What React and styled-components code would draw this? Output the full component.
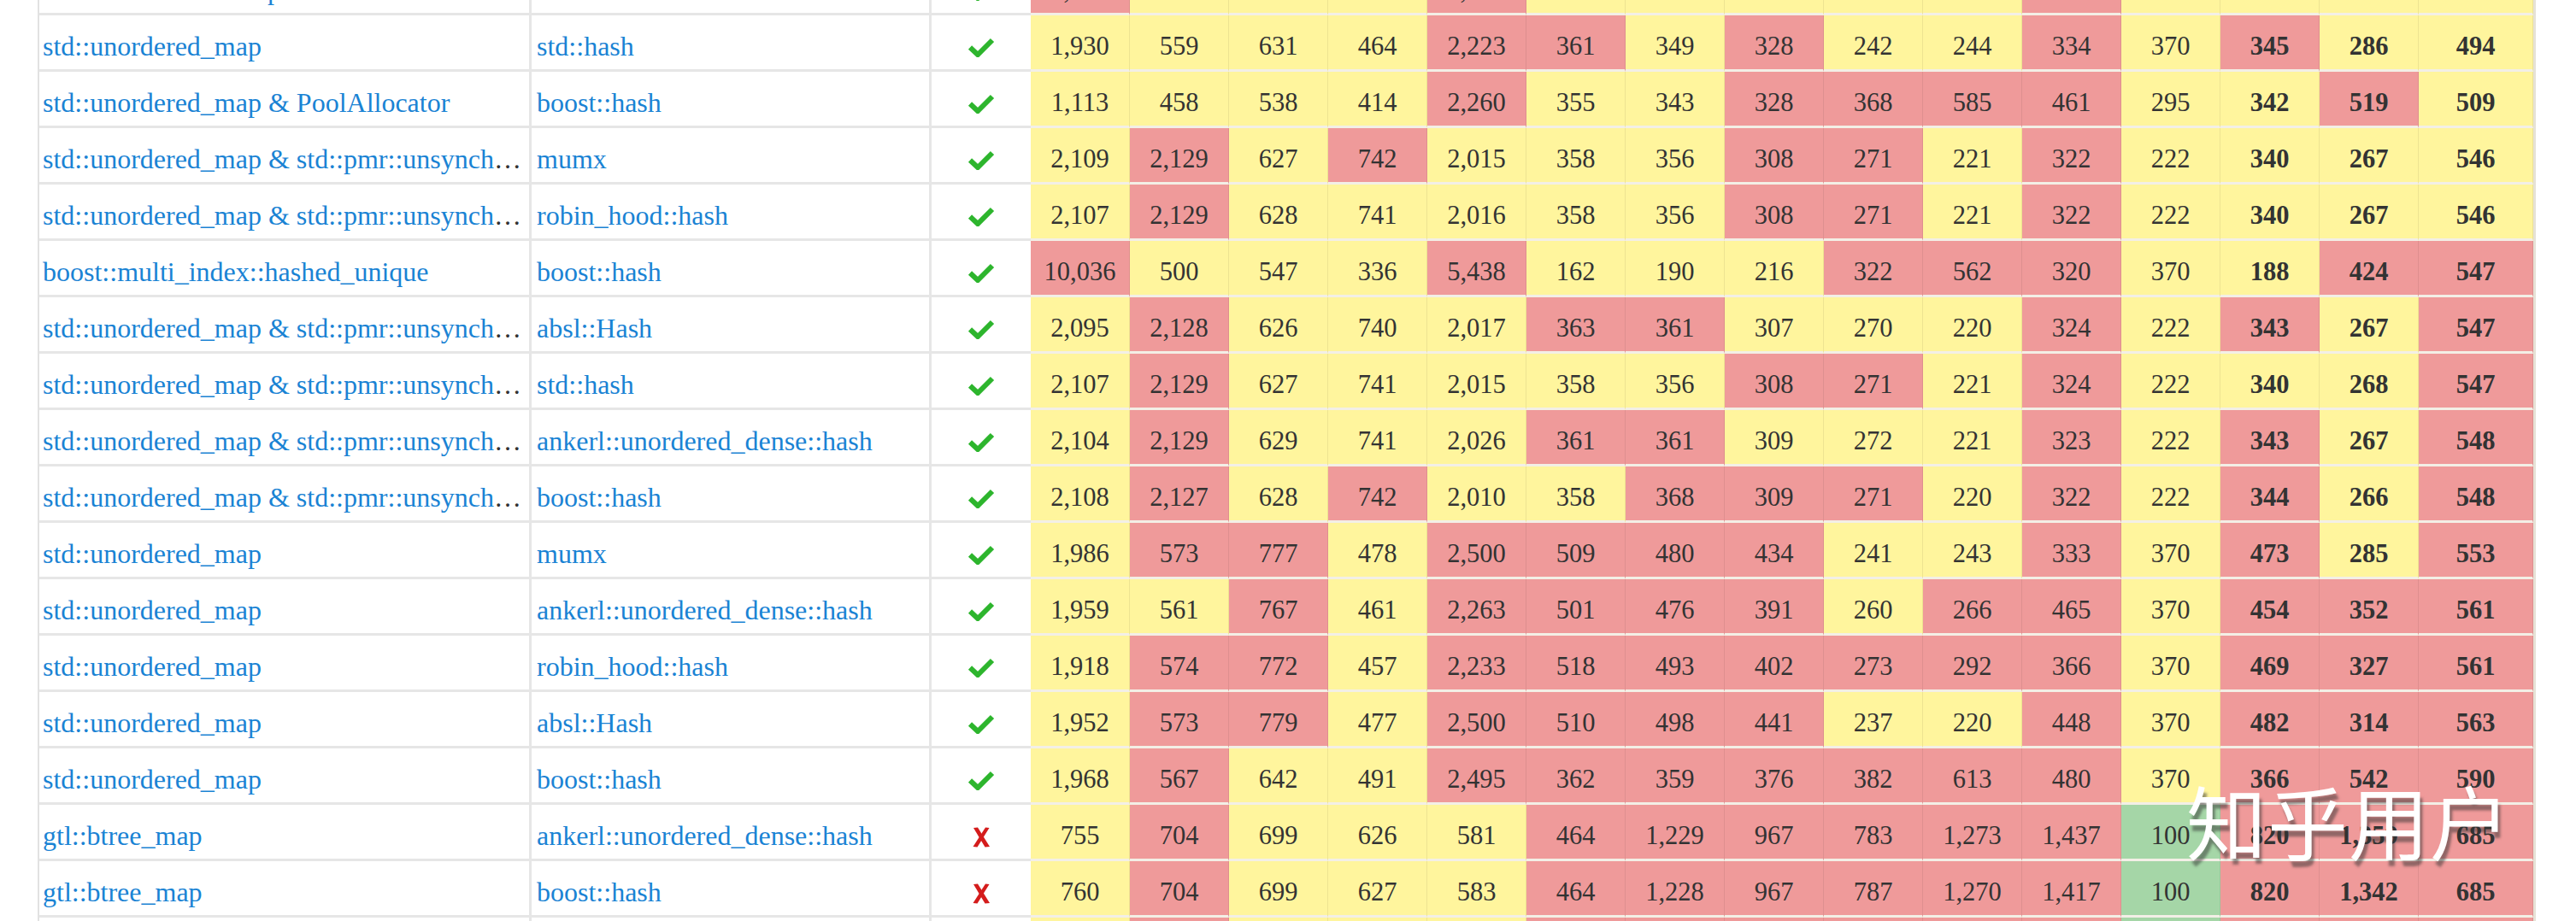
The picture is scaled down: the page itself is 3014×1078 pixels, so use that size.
import React from 'react';
import styled, { createGlobalStyle } from 'styled-components';

const GlobalStyle = createGlobalStyle`
  html, body { margin: 0; padding: 0; background: #ffffff; overflow: hidden; }
  body { font-family: "Liberation Serif", "Times New Roman", serif; }
`;

const Page = styled.div`
  position: relative;
  width: 3014px;
  height: 1078px;
  overflow: hidden;
  padding-left: 44px;
  box-sizing: border-box;
  background: #fff;
`;

const Table = styled.table`
  margin-top: -48px;
  width: 2923px;
  table-layout: fixed;
  border-collapse: separate;
  border-spacing: 0;
  border-left: 2px solid #e2e2e2;
  border-right: 3px solid #e6e2d6;
`;

const Col = styled.col`
  width: ${p => p.$w}px;
`;

const BaseCell = styled.td`
  height: 66px;
  box-sizing: border-box;
  padding: 10px 6px 0;
  vertical-align: middle;
  white-space: nowrap;
  overflow: hidden;
  text-overflow: ellipsis;
  color: #333333;
`;

const TextCell = styled(BaseCell)`
  font-size: 32px;
  padding-left: ${p => (p.$first ? 4 : 6)}px;
  border-bottom: 3px solid #e6e6e6;
  border-right: 3px solid #e6e6e6;
`;

const IconCell = styled(BaseCell)`
  text-align: center;
  border-bottom: 3px solid #e6e6e6;
  padding: 12px 0 0;
`;

const TONES = {
  R: '#ef9a9a',
  Y: '#fff59d',
  G: '#a5d6a7',
};

const ValueCell = styled(BaseCell)`
  text-align: center;
  padding: 10px 2px 0;
  font-size: 30.5px;
  font-weight: ${p => (p.$bold ? 700 : 400)};
  color: #333;
  background: ${p => TONES[p.$tone]};
  border-bottom: 3px solid #f3efe6;
  border-right: 1px solid rgba(0, 0, 0, 0.07);
`;

const Link = styled.a`
  color: #1a83d4;
  text-decoration: none;
`;

const Watermark = styled.div`
  position: absolute;
  left: 2558px;
  top: 912px;
  font-family: "Noto Sans CJK SC", "Noto Sans", sans-serif;
  font-size: 94px;
  line-height: 1;
  color: #ffffff;
  letter-spacing: 1px;
  text-shadow: 3px 7px 3px rgba(50, 50, 50, 0.5);
  pointer-events: none;
`;

const CheckIcon = () => (
  <svg width="32" height="23" viewBox="0 0 32 23" style={{ verticalAlign: 'middle' }}>
    <path d="M3 11.5 L12 20 L29 3" fill="none" stroke="#2db52d" strokeWidth="6" strokeLinejoin="miter" />
  </svg>
);

const CrossIcon = () => (
  <svg width="26" height="26" viewBox="0 0 26 26" style={{ verticalAlign: 'middle' }}>
    <path d="M4 2 L9 1.5 L23 24 L17.5 24.5 Z" fill="#d41c1c" />
    <path d="M18 1.5 L22.5 2 L8.5 24.5 L3.5 24 Z" fill="#d41c1c" />
  </svg>
);

const UNSYNC = 'std::unordered_map & std::pmr::unsynchronized_pool_resource';

const rows = [
  { a: 'boost::container::map', b: 'boost::hash', ok: true,
    v: ['1,987','560','632','465','2,225','348','347','320','243','245','331','370','343','284','495'],
    t: 'RYYYRYYYYYRYYYY' },
  { a: 'std::unordered_map', b: 'std::hash', ok: true,
    v: ['1,930','559','631','464','2,223','361','349','328','242','244','334','370','345','286','494'],
    t: 'YYYYRRYRYYRYRYY' },
  { a: 'std::unordered_map & PoolAllocator', b: 'boost::hash', ok: true,
    v: ['1,113','458','538','414','2,260','355','343','328','368','585','461','295','342','519','509'],
    t: 'YYYYRYYRRRRYYRY' },
  { a: UNSYNC, b: 'mumx', ok: true,
    v: ['2,109','2,129','627','742','2,015','358','356','308','271','221','322','222','340','267','546'],
    t: 'YRYRYYYRRYRYYYY' },
  { a: UNSYNC, b: 'robin_hood::hash', ok: true,
    v: ['2,107','2,129','628','741','2,016','358','356','308','271','221','322','222','340','267','546'],
    t: 'YRYYYYYRRYRYYYY' },
  { a: 'boost::multi_index::hashed_unique', b: 'boost::hash', ok: true,
    v: ['10,036','500','547','336','5,438','162','190','216','322','562','320','370','188','424','547'],
    t: 'RYYYRYYYRRRYYRR' },
  { a: UNSYNC, b: 'absl::Hash', ok: true,
    v: ['2,095','2,128','626','740','2,017','363','361','307','270','220','324','222','343','267','547'],
    t: 'YRYYYRRYYYRYRYR' },
  { a: UNSYNC, b: 'std::hash', ok: true,
    v: ['2,107','2,129','627','741','2,015','358','356','308','271','221','324','222','340','268','547'],
    t: 'YRYYYYYRRYRYYYR' },
  { a: UNSYNC, b: 'ankerl::unordered_dense::hash', ok: true,
    v: ['2,104','2,129','629','741','2,026','361','361','309','272','221','323','222','343','267','548'],
    t: 'YRYYYRRYYYRYRYR' },
  { a: UNSYNC, b: 'boost::hash', ok: true,
    v: ['2,108','2,127','628','742','2,010','358','368','309','271','220','322','222','344','266','548'],
    t: 'YRYRYYRRRYRYRYR' },
  { a: 'std::unordered_map', b: 'mumx', ok: true,
    v: ['1,986','573','777','478','2,500','509','480','434','241','243','333','370','473','285','553'],
    t: 'YRRYRRRRYYRYRYR' },
  { a: 'std::unordered_map', b: 'ankerl::unordered_dense::hash', ok: true,
    v: ['1,959','561','767','461','2,263','501','476','391','260','266','465','370','454','352','561'],
    t: 'YYRYRRRRYRRYRRR' },
  { a: 'std::unordered_map', b: 'robin_hood::hash', ok: true,
    v: ['1,918','574','772','457','2,233','518','493','402','273','292','366','370','469','327','561'],
    t: 'YRRYRRRRRRRYRRR' },
  { a: 'std::unordered_map', b: 'absl::Hash', ok: true,
    v: ['1,952','573','779','477','2,500','510','498','441','237','220','448','370','482','314','563'],
    t: 'YRRYRRRRYYRYRRR' },
  { a: 'std::unordered_map', b: 'boost::hash', ok: true,
    v: ['1,968','567','642','491','2,495','362','359','376','382','613','480','370','366','542','590'],
    t: 'YRYYRRRRRRRYRRR' },
  { a: 'gtl::btree_map', b: 'ankerl::unordered_dense::hash', ok: false,
    v: ['755','704','699','626','581','464','1,229','967','783','1,273','1,437','100','820','1,359','685'],
    t: 'YRYYYRRRRRRGRRR' },
  { a: 'gtl::btree_map', b: 'boost::hash', ok: false,
    v: ['760','704','699','627','583','464','1,228','967','787','1,270','1,417','100','820','1,342','685'],
    t: 'YRYYYRRRRRRGRRR' },
  { a: 'gtl::btree_map', b: 'std::hash', ok: false,
    v: ['762','705','700','628','585','465','1,230','968','785','1,271','1,420','100','821','1,345','686'],
    t: 'YRYYYRRRRRRGRRR' },
];

const widths = [576, 468, 116, ...Array(14).fill(116), 134];

export default function App() {
  return (
    <>
      <GlobalStyle />
      <Page>
        <Table>
          <colgroup>
            {widths.map((w, i) => <Col key={i} $w={w} />)}
          </colgroup>
          <tbody>
            {rows.map((r, ri) => (
              <tr key={ri}>
                <TextCell $first><Link href="#">{r.a}</Link></TextCell>
                <TextCell><Link href="#">{r.b}</Link></TextCell>
                <IconCell>{r.ok ? <CheckIcon /> : <CrossIcon />}</IconCell>
                {r.v.map((val, ci) => (
                  <ValueCell key={ci} $tone={r.t[ci]} $bold={ci >= 12}>{val}</ValueCell>
                ))}
              </tr>
            ))}
          </tbody>
        </Table>
        <Watermark>知乎用户</Watermark>
      </Page>
    </>
  );
}
